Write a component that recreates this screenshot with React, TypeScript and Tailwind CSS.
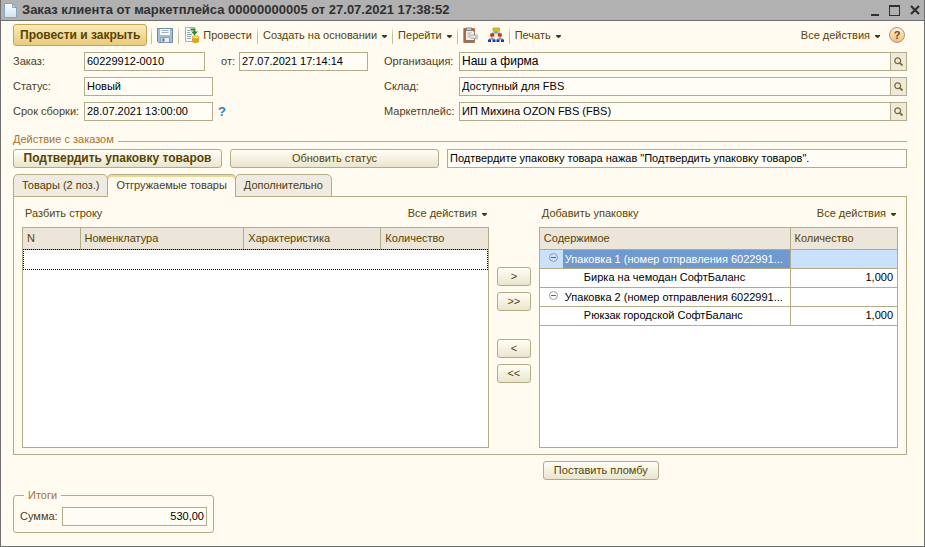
import { useState, type ReactNode } from "react";

const text = "text-[#594304]";
const line = "border-[#b3ac86]";

function Caret() {
  return (
    <svg width="5" height="3" viewBox="0 0 5 3" className="mt-[2px] shrink-0" fill="#4a3a10">
      <path d="M0 0h5v1L3 3H2L0 1z" />
    </svg>
  );
}

function Magnifier() {
  return (
    <svg width="9" height="9" viewBox="0 0 9 9" fill="none" stroke="#7a6a34">
      <circle cx="3.7" cy="3.7" r="2.9" strokeWidth="1.3" />
      <path d="M5.8 5.8L8.5 8.5" strokeWidth="1.9" />
    </svg>
  );
}

function DocIcon() {
  return (
    <svg width="13" height="15" viewBox="0 0 13 15">
      <defs>
        <linearGradient id="doc" x1="0" y1="0" x2="0" y2="1">
          <stop offset="0" stopColor="#ffffff" />
          <stop offset="1" stopColor="#cfe3f2" />
        </linearGradient>
      </defs>
      <path d="M.5.5h8l4 4v10H.5z" fill="url(#doc)" stroke="#86a5be" />
      <path d="M8.500.5v4h4z" fill="#c2daeb" stroke="#86a5be" strokeLinejoin="round" />
    </svg>
  );
}

function SaveIcon() {
  return (
    <svg width="16" height="16" viewBox="0 0 16 16">
      <path d="M.5 1.500h15v14h-14l-1-1z" fill="#a3bfd3" stroke="#6a8ba5" />
      <path d="M3 2h10v6H3z" fill="#f6fafc" />
      <path d="M4.500 3.500h7M4.500 5.500h7" stroke="#9fb0be" />
      <path d="M4 10.500h8.500v5H4z" fill="#e9eff3" stroke="#6a8ba5" strokeWidth=".7" />
      <path d="M5.500 11.500h2v3h-2z" fill="#4d6f8b" />
    </svg>
  );
}

function PostIcon() {
  return (
    <svg width="16" height="17" viewBox="0 0 16 17">
      <path d="M1.500.5h9v14h-9z" fill="#f6fafd" stroke="#9db3c5" />
      <path d="M3 3.500h3M3 5.500h3M3 7.500h5M3 9.500h4M3 11.500h4" stroke="#8fa9bd" />
      <path d="M6.500 2.500h4v2.500" stroke="#2b8a2b" strokeWidth="1.800" fill="none" />
      <path d="M7 4.500h7l-3.500 3.800z" fill="#2b8a2b" />
      <path d="M8 10h7v5c-1 1.500-6 1.500-7 0z" fill="#e9b52c" />
      <ellipse cx="11.500" cy="10.200" rx="3.500" ry="1.400" fill="#ffe07a" stroke="#c4941d" strokeWidth=".6" />
      <path d="M8 12.200c1 1.300 6 1.300 7 0M8 14c1 1.300 6 1.300 7 0" stroke="#c4941d" strokeWidth=".7" fill="none" />
    </svg>
  );
}

function ClipboardIcon() {
  return (
    <svg width="16" height="16" viewBox="0 0 16 16">
      <path d="M.8 1.500h10.700v14H.8z" fill="#a0714f" stroke="#84593b" strokeWidth=".7" />
      <path d="M3 4h7l1 1v8H3z" fill="#f1efec" />
      <path d="M3.500.8h5v2.700h-5z" fill="#c9c9c9" stroke="#777" strokeWidth=".7" />
      <path d="M4.500 6h4M4.500 8h3M4.500 10h2" stroke="#aaa" />
      <path d="M7 9.500l1.500-1.500H13v3.500H8.500z" fill="#e2e2e2" stroke="#999" strokeWidth=".7" />
      <path d="M13 7.500h2v5h-2z" fill="#c8c8c8" />
    </svg>
  );
}

function TreeIcon() {
  return (
    <svg width="16" height="16" viewBox="0 0 16 16">
      <path d="M8 4v2M4 7V6h8v1M4 9v3M12 9v3M1.500 13v-1h5v1M9.500 13v-1h5v1" stroke="#555" strokeWidth=".8" fill="none" />
      <path d="M5 1.500l1-1h6l-1 1z" fill="#f3e860" />
      <path d="M5 1.200h6.500v3H5z" fill="#d6c814" stroke="#938a1c" strokeWidth=".6" />
      <path d="M2.200 6.500h4v3h-4zM9.800 6.500h4v3h-4z" fill="#c9301f" />
      <path d="M0 12.500h3v2.500H0zM4.500 12.500h3v2.500h-3zM8.500 12.500h3v2.500h-3zM13 12.500h3v2.500h-3z" fill="#2d34a8" />
    </svg>
  );
}

function Minus() {
  return (
    <svg width="9" height="9" viewBox="0 0 9 9" fill="none" stroke="#9a9a9a">
      <circle cx="4.5" cy="4.5" r="4" />
      <path d="M2 4.500h5" stroke="#666" />
    </svg>
  );
}

function Divider() {
  return <span className="h-[18px] w-px bg-linear-to-b from-[#fffbf0] via-[#c4bd9c] to-[#c4bd9c]" />;
}

function MenuButton({ children }: { children: ReactNode }) {
  return (
    <button className={`flex items-center gap-[5px] whitespace-nowrap ${text}`}>
      {children}
      <Caret />
    </button>
  );
}

function PushButton({ children, className = "" }: { children: ReactNode; className?: string }) {
  return (
    <button
      className={`h-[19px] rounded-[3px] border ${line} ${text} bg-linear-to-b from-[#fffef6] to-[#e9e5cd] leading-[17px] whitespace-nowrap ${className}`}
    >
      {children}
    </button>
  );
}

const inputClass = `h-[19px] min-w-0 border ${line} bg-[#fffdf6] px-[2px] pb-[2px] text-black outline-none`;

function LookupField({ id, label, value, large }: { id: string; label: string; value: string; large?: boolean }) {
  return (
    <div className="flex items-center">
      <label htmlFor={id} className="w-[75px] shrink-0">{label}</label>
      <input id={id} defaultValue={value} className={`${inputClass} flex-1 ${large ? "text-[12px]" : ""}`} />
      <button aria-label="Выбрать" className={`flex h-[19px] w-4 items-center justify-center border border-l-0 ${line} bg-[#efe9db]`}>
        <Magnifier />
      </button>
    </div>
  );
}

const tabs = ["Товары (2 поз.)", "Отгружаемые товары", "Дополнительно"];

const packages = [
  { name: "Упаковка 1 (номер отправления 6022991...", item: "Бирка на чемодан СофтБаланс", count: "1,000" },
  { name: "Упаковка 2 (номер отправления 6022991...", item: "Рюкзак городской СофтБаланс", count: "1,000" },
];

export default function App() {
  const [tab, setTab] = useState(1);
  const [selected, setSelected] = useState(0);

  return (
    <div className="flex min-h-screen flex-col border-r border-b border-l border-[#6f6f6f] bg-[#fffbf0] font-['Liberation_Sans',Arial,sans-serif] text-[11px] leading-[13px] text-[#4d4023]">
      <header className="flex h-[21px] items-center gap-[5px] border-b border-[#6f6f6f] bg-[#b1b1b1] pr-1 pl-[3px] text-[#303030]">
        <DocIcon />
        <h1 className="flex-1 truncate text-[13px] leading-4 font-bold">
          Заказ клиента от маркетплейса 00000000005 от 27.07.2021 17:38:52
        </h1>
        <div className="flex items-center gap-[10px]">
          <button aria-label="Свернуть">
            <svg width="8" height="11" viewBox="0 0 8 11"><path d="M0 9h8v2H0z" fill="#303030" /></svg>
          </button>
          <button aria-label="Развернуть">
            <svg width="11" height="11" viewBox="0 0 11 11"><path d="M0 0h11v11H0zM1 2v8h9V2z" fillRule="evenodd" fill="#303030" /></svg>
          </button>
          <button aria-label="Закрыть">
            <svg width="10" height="10" viewBox="0 0 10 10"><path d="M1 1l8 8M9 1L1 9" stroke="#303030" strokeWidth="2.200" /></svg>
          </button>
        </div>
      </header>

      <main className="flex flex-1 flex-col pt-[3px] pr-[17px] pb-[13px] pl-3">
        <div className="flex h-[22px] items-center">
          <button className="h-[22px] rounded-[3px] border border-[#c5a553] bg-linear-to-b from-[#fbeab8] to-[#e8cb7d] px-[6px] text-[12px] font-bold whitespace-nowrap text-[#594304]">
            Провести и закрыть
          </button>
          <div className="ml-1 flex items-center gap-[5px]">
            <Divider />
            <button aria-label="Записать"><SaveIcon /></button>
            <Divider />
            <button className={`flex items-center gap-[3px] ${text}`}><PostIcon />Провести</button>
            <Divider />
            <MenuButton>Создать на основании</MenuButton>
            <Divider />
            <MenuButton>Перейти</MenuButton>
            <Divider />
            <button aria-label="Отчеты"><ClipboardIcon /></button>
            <button aria-label="Структура подчиненности" className="ml-1"><TreeIcon /></button>
            <Divider />
            <MenuButton>Печать</MenuButton>
          </div>
          <div className="ml-auto flex items-center gap-[9px] pr-[2px]">
            <MenuButton>Все действия</MenuButton>
            <button className="size-4 rounded-full border border-[#a5988a] bg-linear-to-b from-[#fff0d8] to-[#f7bb72] text-[11px] leading-[14px] font-bold text-[#6b4a20]">
              ?
            </button>
          </div>
        </div>

        <div className="mt-[6px] flex gap-4">
          <div className="flex w-[355px] shrink-0 flex-col gap-[6px]">
            <div className="flex items-center">
              <label htmlFor="order" className="w-[71px] shrink-0">Заказ:</label>
              <input id="order" defaultValue="60229912-0010" className={`${inputClass} w-[121px]`} />
              <label htmlFor="date" className="ml-4 w-[18px] shrink-0">от:</label>
              <input id="date" defaultValue="27.07.2021 17:14:14" className={`${inputClass} flex-1`} />
            </div>
            <div className="flex items-center">
              <label htmlFor="status" className="w-[71px] shrink-0">Статус:</label>
              <input id="status" defaultValue="Новый" className={`${inputClass} w-[129px]`} />
            </div>
            <div className="flex items-center">
              <label htmlFor="term" className="w-[71px] shrink-0 whitespace-nowrap">Срок сборки:</label>
              <input id="term" defaultValue="28.07.2021 13:00:00" className={`${inputClass} w-[129px]`} />
              <button className="ml-[5px] text-[13px] font-bold text-[#2b82b8]">?</button>
            </div>
          </div>
          <div className="flex min-w-0 flex-1 flex-col gap-[6px]">
            <LookupField id="org" label="Организация:" value="Наш а фирма" large />
            <LookupField id="store" label="Склад:" value="Доступный для FBS" />
            <LookupField id="market" label="Маркетплейс:" value="ИП Михина OZON FBS (FBS)" />
          </div>
        </div>

        <h2 className="mt-3 flex items-center gap-1 text-[#a87130]">
          Действие с заказом
          <span className={`mt-1 flex-1 border-t ${line}`} />
        </h2>
        <div className="mt-[3px] flex gap-2">
          <PushButton className="w-[209px] text-[12px] font-bold">Подтвердить упаковку товаров</PushButton>
          <PushButton className="w-[209px]">Обновить статус</PushButton>
          <input
            aria-label="Подсказка"
            readOnly
            value={'Подтвердите упаковку товара нажав "Подтвердить упаковку товаров".'}
            className={`${inputClass} flex-1`}
          />
        </div>

        <div role="tablist" className="z-10 mt-[6px] -mb-px flex">
          {tabs.map((name, i) => (
            <button
              key={name}
              role="tab"
              aria-selected={tab === i}
              onClick={() => setTab(i)}
              className={`h-[23px] rounded-t-[5px] border px-2 text-[#4d3a10] ${line} ${i > 0 ? "-ml-px" : ""} ${
                tab === i ? "border-b-[#fffbf0] bg-[#fffbf0] shadow-[inset_0_2px_0_#f0d796]" : "bg-[#f0ebe0]"
              }`}
            >
              {name}
            </button>
          ))}
        </div>
        <section className={`grid flex-1 grid-cols-[13fr_34px_10fr] gap-2 border ${line} px-2 pt-[10px] pb-[6px]`}>
          <div className="flex min-w-0 flex-col">
            <div className="flex justify-between pr-[2px] pl-[3px]">
              <button className={text}>Разбить строку</button>
              <MenuButton>Все действия</MenuButton>
            </div>
            <div className={`mt-[7px] flex-1 border ${line} bg-white`}>
              <table className="w-full table-fixed border-collapse text-left">
                <thead>
                  <tr className={`h-[21px] border-b ${line} bg-[#ece5d9] ${text}`}>
                    <th className={`w-[57px] border-r ${line} px-1 font-normal`}>N</th>
                    <th className={`border-r ${line} px-1 font-normal`}>Номенклатура</th>
                    <th className={`w-[137px] border-r ${line} px-1 font-normal`}>Характеристика</th>
                    <th className="w-[107px] px-1 font-normal">Количество</th>
                  </tr>
                </thead>
                <tbody>
                  <tr className="h-[21px]">
                    <td colSpan={4} className="outline-1 -outline-offset-1 outline-black outline-dotted" />
                  </tr>
                </tbody>
              </table>
            </div>
          </div>

          <div className="flex flex-col gap-[6px] pt-[60px]">
            <PushButton>&gt;</PushButton>
            <PushButton>&gt;&gt;</PushButton>
            <PushButton className="mt-[22px]">&lt;</PushButton>
            <PushButton>&lt;&lt;</PushButton>
          </div>

          <div className="flex min-w-0 flex-col">
            <div className="flex justify-between pr-[2px] pl-[3px]">
              <button className={text}>Добавить упаковку</button>
              <MenuButton>Все действия</MenuButton>
            </div>
            <div className={`mt-[7px] flex-1 border ${line} bg-white`}>
              <table className="w-full table-fixed border-collapse text-left">
                <thead>
                  <tr className={`h-[21px] border-b ${line} bg-[#ece5d9] ${text}`}>
                    <th className={`border-r ${line} px-1 font-normal`}>Содержимое</th>
                    <th className="w-[107px] px-1 font-normal">Количество</th>
                  </tr>
                </thead>
                {packages.map((p, i) => (
                  <tbody key={p.name} className="text-black">
                    <tr
                      onClick={() => setSelected(i)}
                      className={`h-[19px] border-b ${line} ${selected === i ? "bg-[#c9e1fe]" : ""}`}
                    >
                      <td className={`border-r ${line} p-0`}>
                        <div className="flex h-[18px] items-center">
                          <button aria-label="Свернуть группу" className="flex h-full w-[23px] items-start pt-[3px] pl-[9px]"><Minus /></button>
                          <span className={`flex-1 pl-[2px] leading-[18px] whitespace-nowrap ${selected === i ? "bg-[#7099cf] text-white" : ""}`}>
                            {p.name}
                          </span>
                        </div>
                      </td>
                      <td />
                    </tr>
                    <tr className={`h-[19px] border-b ${line}`}>
                      <td className={`border-r ${line} py-0 pr-1 pl-11`}>{p.item}</td>
                      <td className="py-0 pr-1 text-right">{p.count}</td>
                    </tr>
                  </tbody>
                ))}
              </table>
            </div>
          </div>
        </section>

        <div className="mt-[6px] grid grid-cols-[13fr_34px_10fr] gap-2 px-[9px]">
          <PushButton className="col-start-3 ml-1 w-[116px]">Поставить пломбу</PushButton>
        </div>

        <fieldset className={`mt-[9px] w-[201px] min-w-0 rounded-[3px] border ${line} px-[6px] pt-[5px] pb-[6px]`}>
          <legend className="ml-1 px-1 text-[#a87130]">Итоги</legend>
          <div className="flex items-center gap-1">
            <label htmlFor="sum">Сумма:</label>
            <input id="sum" defaultValue="530,00" className={`${inputClass} flex-1 text-right`} />
          </div>
        </fieldset>
      </main>
    </div>
  );
}
